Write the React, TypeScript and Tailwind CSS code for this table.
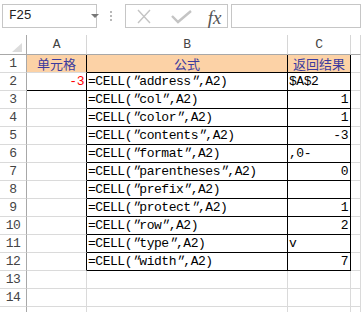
import React from 'react';

type Align = 'l' | 'r';

const rows: [string, string, Align][] = [
  ['address', '$A$2', 'l'],
  ['col', '1', 'r'],
  ['color', '1', 'r'],
  ['contents', '-3', 'r'],
  ['format', ',0-', 'l'],
  ['parentheses', '0', 'r'],
  ['prefix', '', 'l'],
  ['protect', '1', 'r'],
  ['row', '2', 'r'],
  ['type', 'v', 'l'],
  ['width', '7', 'r'],
];

const mono = "font-['Liberation_Mono',monospace] text-[13px] tracking-[-0.47px]";
const cjk = "font-['Noto_Sans_CJK_SC',sans-serif] text-[13px] text-[#3b3b9e]";

const Toolbar: React.FC = () => (
  <div className="flex h-[35px] items-start pt-[4px] pl-[2px]">
    <div className="relative flex h-[24px] w-[102px] items-center border border-[#c6c6c6] pl-[6px]">
      <span className={`${mono} text-[#222]`}>F25</span>
      <svg className="absolute left-[88px] top-[9px]" width="8" height="5" viewBox="0 0 8 5">
        <path d="M0 0 L8 0 L4 4 Z" fill="#777" />
      </svg>
    </div>
    <div className="flex h-[24px] w-[30px] flex-col items-center justify-center gap-[2px]">
      <span className="h-[2px] w-[2px] bg-[#b8b8b8]" />
      <span className="h-[2px] w-[2px] bg-[#b8b8b8]" />
      <span className="h-[2px] w-[2px] bg-[#b8b8b8]" />
    </div>
    <div className="relative h-[24px] w-[112px] border border-[#c6c6c6]">
      <svg className="absolute left-[11px] top-[4px]" width="14" height="15" viewBox="0 0 14 15">
        <path d="M1 1 L13 14 M13 1 L1 14" stroke="#c4c4c4" strokeWidth="1.4" fill="none" />
      </svg>
      <svg className="absolute left-[45px] top-[5px]" width="21" height="14" viewBox="0 0 21 14">
        <path d="M1 6 L7 12 L20 1" stroke="#c4c4c4" strokeWidth="2.4" fill="none" />
      </svg>
      <span className="absolute left-[82px] top-[-1px] font-['Liberation_Serif',serif] text-[19px] italic text-[#555]">
        fx
      </span>
    </div>
    <div className="ml-[3px] h-[24px] w-[140px] border border-[#c6c6c6]" />
  </div>
);

const Cell: React.FC<{ r?: string; b?: string; bg?: string; className?: string; children?: React.ReactNode }> = ({
  r = 'border-r-[#dadada]',
  b = 'border-b-[#dadada]',
  bg = 'bg-white',
  className = '',
  children,
}) => (
  <div className={`flex h-[18px] items-center overflow-hidden whitespace-nowrap border-r border-b ${r} ${b} ${bg} ${className}`}>
    {children}
  </div>
);

const RowNum: React.FC<{ n?: number }> = ({ n }) => (
  <Cell r="border-r-[#a8a8a8]" className={`justify-center ${mono} text-[#444]`}>
    {n}
  </Cell>
);

// Chinese-style slanted quote
const Q = () => <span className="inline-block skew-x-[-18deg]">″</span>;

const Formula: React.FC<{ arg: string }> = ({ arg }) => (
  <span>
    =CELL(<Q />
    {arg}
    <Q />,A2)
  </span>
);

const App: React.FC = () => {
  const orange = 'bg-[#fcd2a6]';
  return (
    <div className="h-[312px] w-[361px] overflow-hidden bg-white">
      <Toolbar />
      <div className="grid grid-cols-[27px_60px_201px_63px_1fr]">
        {/* column headers */}
        <div className="relative h-[20px] border-r border-b border-r-[#a8a8a8] border-b-[#a8a8a8]">
          <svg className="absolute left-[12px] top-[8px]" width="10" height="9" viewBox="0 0 10 9">
            <path d="M10 0 L10 9 L0 9 Z" fill="#dcdcdc" />
          </svg>
        </div>
        {['A', 'B', 'C', ''].map((h, i) => (
          <div
            key={i}
            className={`flex h-[20px] items-center justify-center border-r border-b border-r-[#d6d6d6] border-b-[#a8a8a8] ${mono} text-[#444]`}
          >
            {h}
          </div>
        ))}

        {/* row 1 */}
        <RowNum n={1} />
        <Cell r="border-r-black" bg={orange} className={`justify-center ${cjk}`}>
          单元格
        </Cell>
        <Cell r="border-r-black" b="border-b-black" bg={orange} className={`justify-center ${cjk}`}>
          公式
        </Cell>
        <Cell r="border-r-black" b="border-b-black" bg={orange} className={`justify-center ${cjk}`}>
          返回结果
        </Cell>
        <Cell />

        {rows.map(([arg, val, align], i) => (
          <React.Fragment key={arg}>
            <RowNum n={i + 2} />
            <Cell
              r="border-r-black"
              b={i === 0 ? 'border-b-black' : 'border-b-[#dadada]'}
              className={`justify-end pr-[2px] ${mono} text-[#ff0000]`}
            >
              {i === 0 ? '-3' : ''}
            </Cell>
            <Cell r="border-r-black" b="border-b-black" className={`pl-[1px] ${mono} text-black`}>
              <Formula arg={arg} />
            </Cell>
            <Cell
              r="border-r-black"
              b="border-b-black"
              className={`${align === 'r' ? 'justify-end pr-[2px]' : 'pl-[1px]'} ${mono} text-black`}
            >
              {val}
            </Cell>
            <Cell />
          </React.Fragment>
        ))}

        {[13, 14, undefined].map((n, i) => (
          <React.Fragment key={i}>
            <RowNum n={n} />
            <Cell />
            <Cell />
            <Cell />
            <Cell />
          </React.Fragment>
        ))}
      </div>
    </div>
  );
};

export default App;
